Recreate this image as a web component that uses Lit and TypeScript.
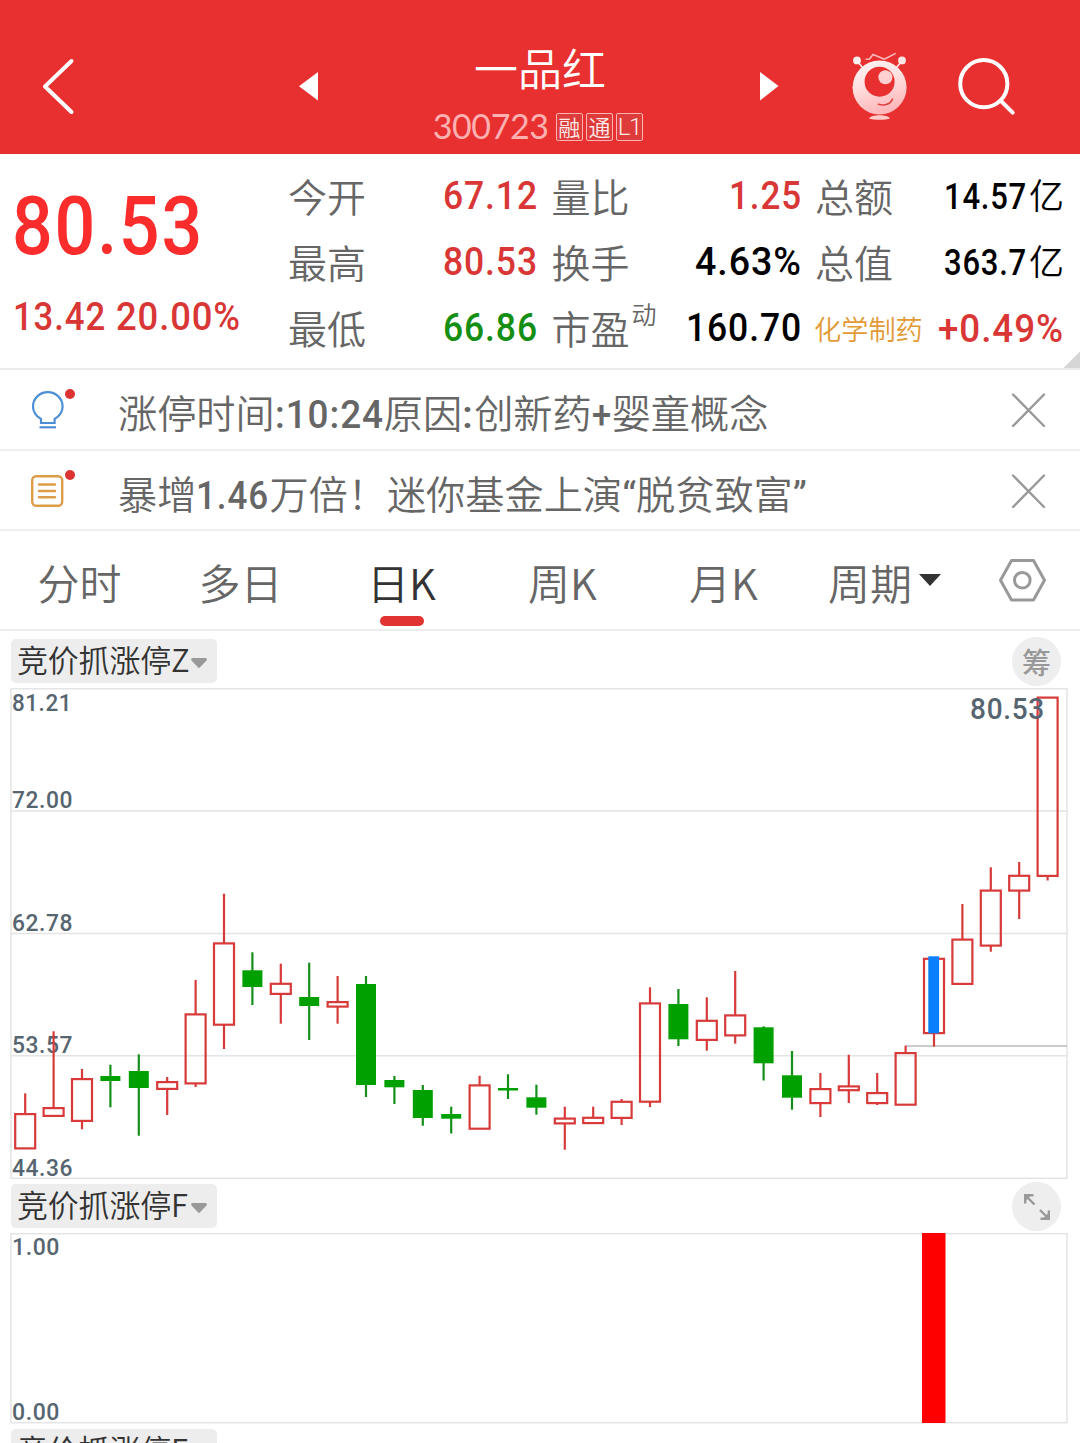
import { LitElement, html, svg, css, nothing } from "lit";
import { customElement, property } from "lit/decorators.js";

/** Fixed-advance numeral run; sits on the surrounding text baseline. */
@customElement("din-text")
class DinText extends LitElement {
  @property() text = "";
  @property({ type: Number }) width = 60;
  @property({ type: Number }) size = 39;
  static styles = css`
    :host { display: inline-block; line-height: 0; }
    .run { display: inline-block; vertical-align: baseline; overflow: visible; }
    .glyphs { font-family: Roboto, "Liberation Sans", sans-serif; font-weight: 500; fill: currentColor; letter-spacing: 0.025em; }
  `;
  render() {
    const h = Math.round(this.size * 0.7);
    return html`<svg class="run" width=${this.width} height=${h}>
      <text class="glyphs" x="0" y=${h} font-size=${this.size} textLength=${this.width} lengthAdjust="spacingAndGlyphs">${this.text}</text>
    </svg>`;
  }
}

const n = (text: string, width: number, size = 39.5) =>
  html`<din-text .text=${text} .width=${width} .size=${size}></din-text>`;

// kind, high, body top, body bottom, low
type Candle = [string, number, number, number, number];
const CANDLES: Candle[] = [
  ["r", 1093.3, 1113, 1149.5, 1149], ["r", 1031.3, 1107, 1117, 1117], ["r", 1069, 1078, 1122, 1129.3],
  ["g", 1064.7, 1076, 1081, 1107.3], ["g", 1054.3, 1071, 1088, 1135.7], ["r", 1077, 1081, 1090, 1115],
  ["r", 980, 1013.3, 1084.5, 1087], ["r", 893.7, 942.3, 1025.8, 1049], ["g", 952.3, 970.3, 987, 1005],
  ["r", 963.7, 982.7, 995, 1023.7], ["g", 962.7, 997, 1006, 1040], ["r", 976, 1001, 1007.7, 1023.7],
  ["g", 976, 984, 1085, 1097], ["g", 1076, 1080, 1087.3, 1104], ["g", 1085, 1090, 1118, 1125.7],
  ["g", 1106.7, 1114, 1118.7, 1133.5], ["r", 1075.7, 1084.3, 1129.8, 1129], ["g", 1074.3, 1088, 1090.5, 1099],
  ["g", 1084.7, 1097.3, 1107.7, 1114.7], ["r", 1106.7, 1117.5, 1124.5, 1149.7], ["r", 1106.7, 1116.7, 1124.2, 1124],
  ["r", 1099, 1100.7, 1119, 1125], ["r", 987.3, 1002.3, 1102.8, 1107], ["g", 989, 1004, 1039.3, 1046],
  ["r", 997.3, 1019.7, 1041, 1050.7], ["r", 971, 1014.3, 1036.5, 1043.7], ["g", 1026.3, 1027.3, 1063.3, 1080.5],
  ["g", 1051, 1075.3, 1097.7, 1109.7], ["r", 1073, 1088, 1104.2, 1117], ["r", 1054.7, 1085.3, 1091.3, 1103],
  ["r", 1073, 1092, 1104.2, 1105], ["r", 1045.7, 1052, 1105.8, 1105], ["r", 958, 957.7, 1034.2, 1046.7],
  ["r", 904, 938.5, 985, 984], ["r", 867.3, 889.5, 946.7, 951.7], ["r", 862, 874.7, 891.7, 919],
  ["r", 697, 696.5, 877, 880.5],
];

const RED = "#d83a3a";
const GREEN = "#00a000";

@customElement("app-root")
class AppRoot extends LitElement {
  static styles = css`
    :host { display: block; width: 1080px; height: 1443px; overflow: hidden; background: #fff;
      font-family: "Noto Sans CJK SC", sans-serif; font-weight: 350; color: #666; }
    * { box-sizing: border-box; }
    svg { display: block; }
    .header { height: 154px; background: #e83030; display: grid; grid-template-columns: 240px 140px 320px 140px 80px 160px; color: #fff; }
    .title { display: flex; flex-direction: column; align-items: center; padding-top: 40px; }
    .name { font-size: 44px; line-height: 54px; height: 69px; }
    .code { display: flex; align-items: center; height: 36px; margin-right: 4px; }
    .digits { font-family: Lato, sans-serif; font-weight: 400; font-size: 34px; color: #ffb0b0; line-height: 34px; width: 123px; letter-spacing: -0.4px; white-space: nowrap; padding-bottom: 2px; }
    .tag { width: 27px; height: 28px; border: 1.5px solid #ffb3b3; border-radius: 2px; font-size: 22px; line-height: 24px; margin-right: 3.3px;
      background: #dd3c3a; color: #ffe9e9; display: flex; justify-content: center; white-space: nowrap; }
    .tag:last-child { margin-right: 0; font-family: Roboto, sans-serif; font-size: 24px; line-height: 27px; letter-spacing: -1.5px; padding-right: 1px; }
    .quote { height: 216px; display: grid; grid-template-columns: 275px 1fr; padding-left: 12px; border-bottom: 2px solid #ebebeb; color: #000; background: linear-gradient(135deg, transparent 50%, #d6d6d6 51%) right bottom / 17px 17px no-repeat; }
    .price { color: #fa2c2c; display: flex; flex-direction: column; align-items: flex-start; padding-top: 43px; }
    .big { display: flex; height: 57px; }
    .change { margin: 49px 0 0 1px; color: #d93636; display: flex; gap: 10px; }
    .stats { display: grid; grid-template-columns: 250px 250px 249px; column-gap: 13.5px; grid-auto-rows: 66px; padding: 8px 0 0 1px; }
    .cell { display: flex; justify-content: space-between; align-items: baseline; line-height: 66px; white-space: nowrap; }
    .label { font-size: 39px; color: #666; }
    .sup { font-size: 25px; line-height: 0; vertical-align: 20px; margin-left: 2px; }
    .sector { font-size: 27.2px; color: #e39a35; margin-left: -1px; transform: translateY(1px); }
    .up { color: #d93636; }
    .down { color: #148f14; }
    .lift { transform: translateY(-3px); }
    .drop { transform: translateY(2.5px); }
    .unit { font-size: 35px; display: flex; align-items: baseline; gap: 2px; }
    .notice { height: 80.5px; border-bottom: 2px solid #f0f0f0; display: grid; grid-template-columns: 118px 1fr 104px; }
    .message { font-size: 39.2px; line-height: 82px; white-space: nowrap; }
    .quotemark { display: inline-block; width: 14px; text-align: center; font-family: Roboto, sans-serif; font-weight: 400; line-height: 0; }
    .tabs { height: 100px; border-bottom: 2px solid #ededed; display: grid; grid-template-columns: repeat(6, 161px) 114px; font-size: 42px; line-height: 98px; }
    .tab { display: flex; justify-content: center; align-items: center; position: relative; padding: 2px 2px 0 0; white-space: nowrap; }
    .active { color: #333; }
    .active::after { content: ""; position: absolute; left: 58px; top: 85px; width: 44px; height: 10px; border-radius: 5px; background: #e23333; }
    .arrow { border: 11.5px solid transparent; border-top: 12px solid #333; border-bottom: 0; margin: -4px 0 0 7px; }
    .bar { height: 57px; display: flex; justify-content: space-between; align-items: flex-start; padding: 8px 19px 0 11px; }
    .chip { width: 206px; height: 44px; border-radius: 5px; background: #ededed; color: #333; font-size: 31px; line-height: 40px; padding-left: 6px; display: flex; align-items: center; white-space: nowrap; }
    .chip-text { width: 173px; margin-top: -5px; letter-spacing: -0.2px; }
    .caret { margin: 4px 0 0 0; }
    .round { width: 49px; height: 49px; border-radius: 50%; background: #eee; color: #999; font-size: 29px; font-weight: 500; line-height: 49px; display: flex; justify-content: center; align-items: center; margin-top: -2px; }
    .sub { height: 54px; padding-top: 5px; }
    .axis { font-family: Roboto, sans-serif; font-weight: 500; fill: #566570; letter-spacing: 0.025em; }
  `;

  header() {
    return html`<div class="header">
      <svg width="240" height="154" viewBox="0 0 240 154"><path d="M71.5 61 45 86.5 71.5 112" fill="none" stroke="#fff" stroke-width="4" stroke-linecap="round" stroke-linejoin="round"/></svg>
      <svg width="140" height="154" viewBox="240 0 140 154"><path d="M299 86.3 318 72v28.5z" fill="#fff"/></svg>
      <div class="title">
        <div class="name">一品红</div>
        <div class="code"><span class="digits">300723</span><span class="tag">融</span><span class="tag">通</span><span class="tag">L1</span></div>
      </div>
      <svg width="140" height="154" viewBox="700 0 140 154"><path d="M778.5 86 760 72v28.5z" fill="#fff"/></svg>
      <svg width="80" height="154" viewBox="840 0 80 154">
        <defs><linearGradient id="face" x1="0" y1="0" x2="0.3" y2="1"><stop offset="0" stop-color="#fff5f5"/><stop offset="0.45" stop-color="#ffe2e2"/><stop offset="1" stop-color="#ffb9bc"/></linearGradient></defs>
        <g stroke="#ffdede" fill="none"><path d="M857 61l6 7M902 61l-6 7" stroke-width="1.8"/><path d="M865.5 59.3l4-.3 3.5-4.5 11.4 4.7 11.3-5.8" stroke="#ffc0c0" stroke-width="1.5"/></g>
        <circle cx="857" cy="60.4" r="3.9" fill="#fff0f0"/><circle cx="902" cy="60.4" r="3.9" fill="#ffe6e6"/>
        <circle cx="879.6" cy="87.5" r="27" fill="url(#face)"/>
        <circle cx="879.6" cy="81.7" r="15" fill="#e83030"/><circle cx="885.4" cy="77.3" r="7" fill="#ffd0d0"/>
        <path d="M878.4 104.2c6 1.8 12 .2 14-5" fill="none" stroke="#e04040" stroke-width="1.6" stroke-linecap="round"/>
        <path d="M869 118.5c2-4.4 19-4.4 21 0-4 1.8-17 1.8-21 0z" fill="#ffcaca"/>
      </svg>
      <svg width="160" height="154" viewBox="920 0 160 154"><g fill="none" stroke="#fff" stroke-width="4"><circle cx="983.8" cy="83.7" r="23.6"/><path d="M1000.5 100.5 1012.7 112.7" stroke-linecap="round"/></g></svg>
    </div>`;
  }

  quote() {
    return html`<div class="quote">
      <div class="price">
        <div class="big">${n("80.53", 192, 81)}</div>
        <div class="change">${n("13.42", 93, 38)}${n("20.00%", 125, 38)}</div>
      </div>
      <div class="stats">
        <div class="cell"><span class="label">今开</span><span class="up lift">${n("67.12", 95)}</span></div>
        <div class="cell"><span class="label">量比</span><span class="up lift">${n("1.25", 73)}</span></div>
        <div class="cell"><span class="label">总额</span><span class="unit lift">${n("14.57", 83, 36)}<span>亿</span></span></div>
        <div class="cell"><span class="label">最高</span><span class="up lift">${n("80.53", 95)}</span></div>
        <div class="cell"><span class="label">换手</span><span class="lift">${n("4.63%", 107)}</span></div>
        <div class="cell"><span class="label">总值</span><span class="unit lift">${n("363.7", 83, 36)}<span>亿</span></span></div>
        <div class="cell"><span class="label">最低</span><span class="down lift">${n("66.86", 95)}</span></div>
        <div class="cell"><span class="label">市盈<span class="sup">动</span></span><span class="lift">${n("160.70", 116)}</span></div>
        <div class="cell"><span class="sector">化学制药</span><span class="up drop">${n("+0.49%", 126)}</span></div>
      </div>
    </div>`;
  }

  cross() {
    return html`<svg width="104" height="80" viewBox="976 370 104 80"><path d="M1013 394.5 1044 426M1044 394.5 1013 426" stroke="#999" stroke-width="2.4" stroke-linecap="round"/></svg>`;
  }

  notices() {
    return html`<div class="notice">
        <svg width="118" height="80" viewBox="0 370 118 80"><g fill="none" stroke="#4d8fd6" stroke-width="2.2"><path d="M41 423v-4c-5-3-8-7.500-8-12.500a14.800 14.300 0 0 1 29.600 0c0 5-3 9.500-8 12.500v4z"/><path d="M39.500 427.300h16.500"/></g><circle cx="70" cy="394" r="5" fill="#dd3333"/></svg>
        <div class="message">涨停时间${n(":10:24", 109)}原因${n(":", 12)}创新药${n("+", 20)}婴童概念</div>
        ${this.cross()}
      </div>
      <div class="notice">
        <svg width="118" height="80" viewBox="0 370 118 80"><g fill="none" stroke="#dd9d48" stroke-width="2.4"><rect x="32.200" y="395.200" width="30" height="29.600" rx="4"/><path d="M39 403.500h16M39 410h16M39 416.300h16" stroke-linecap="round"/></g><circle cx="70" cy="394" r="5" fill="#dd3333"/></svg>
        <div class="message">暴增${n("1.46", 73)}万倍！迷你基金上演<span class="quotemark">“</span>脱贫致富<span class="quotemark">”</span></div>
        ${this.cross()}
      </div>`;
  }

  tabs() {
    const names = ["分时", "多日", "日K", "周K", "月K", "周期"];
    return html`<div class="tabs">
      ${names.map((t, i) => html`<div class="tab ${i === 2 ? "active" : ""}">${t}${i === 5 ? html`<span class="arrow"></span>` : nothing}</div>`)}
      <svg width="114" height="98" viewBox="966 531 114 98"><g fill="none" stroke="#999" stroke-width="3" stroke-linejoin="round"><path d="M1011.500 560.500h22l11 19.700-11 19.800h-22l-11-19.800z"/><circle cx="1022.300" cy="580.200" r="7.800"/></g></svg>
    </div>`;
  }

  chip(text: string) {
    return html`<div class="chip"><span class="chip-text">${text}</span><svg class="caret" width="18" height="12" viewBox="0 0 18 12"><path d="M2.500 1h13q2 .5 1 2.500L9.800 10.600q-.8.700-1.600 0L1.500 3.500Q.5 1.500 2.500 1z" fill="#999"/></svg></div>`;
  }

  label(x: number, y: number, text: string, w: number, size = 24.5) {
    return svg`<text class="axis" x=${x} y=${y} font-size=${size} textLength=${w} lengthAdjust="spacingAndGlyphs">${text}</text>`;
  }

  candle([kind, high, top, bottom, low]: Candle, i: number) {
    const x = 25.2 + i * 28.4;
    const red = kind === "r";
    const c = red ? RED : "#158f1a";
    return svg`
      ${high < top ? svg`<path d="M${x} ${high}V${top + 1}" stroke=${c} stroke-width="2.2"/>` : nothing}
      ${low > bottom ? svg`<path d="M${x} ${bottom - 1}V${low}" stroke=${c} stroke-width="2.2"/>` : nothing}
      ${red
        ? svg`<rect x=${x - 10} y=${top + 1.1} width="20" height=${bottom - top - 2.2} fill="none" stroke=${RED} stroke-width="2.200"/>`
        : svg`<rect x=${x - 10} y=${top} width="20" height=${bottom - top} fill=${GREEN}/>`}`;
  }

  chart() {
    return html`<svg width="1080" height="491" viewBox="0 688 1080 491">
      <g fill="none" stroke="#e4e4e4" stroke-width="1.500"><rect x="11" y="688.700" width="1056" height="489.600"/><path d="M11 811H1067M11 933.500H1067M11 1055.700H1067"/></g>
      ${this.label(12, 710.5, "81.21", 60)}${this.label(12, 807.5, "72.00", 61)}${this.label(12, 930.5, "62.78", 61)}${this.label(12, 1052.5, "53.57", 61)}${this.label(12, 1175.5, "44.36", 61)}
      <path d="M905.500 1046H1067" stroke="#bbb" stroke-width="1.500"/>
      ${CANDLES.map((c, i) => this.candle(c, i))}
      <rect x="928.300" y="956.300" width="10.800" height="77" fill="#0a80ff"/>
      ${this.label(970, 718.5, "80.53", 75, 30)}
    </svg>`;
  }

  subChart() {
    return html`<svg width="1080" height="191" viewBox="0 1233 1080 191">
      <rect x="11" y="1233.700" width="1056" height="189" fill="none" stroke="#e4e4e4" stroke-width="1.500"/>
      ${this.label(12, 1255, "1.00", 48)}${this.label(12, 1419.5, "0.00", 48)}
      <rect x="922" y="1232" width="23.500" height="191" fill="#fe0000"/>
    </svg>`;
  }

  render() {
    return html`${this.header()}${this.quote()}${this.notices()}${this.tabs()}
      <div class="bar">${this.chip("竞价抓涨停Z")}<span class="round">筹</span></div>
      ${this.chart()}
      <div class="bar sub">${this.chip("竞价抓涨停F")}<span class="round"><svg width="30" height="30" viewBox="0 0 30 30" fill="none" stroke="#999" stroke-width="2.400"><path d="M3.200 11.500V3.200h8.300M4 4l8.500 8.500M26.800 18.500v8.300h-8.300M26 26l-8-8"/><path d="M3 3h6.500L3 9.500zM27 27h-6.500l6.500-6.500z" fill="#999" stroke="none"/></svg></span></div>
      ${this.subChart()}
      <div class="bar sub">${this.chip("竞价抓涨停F")}</div>`;
  }
}
